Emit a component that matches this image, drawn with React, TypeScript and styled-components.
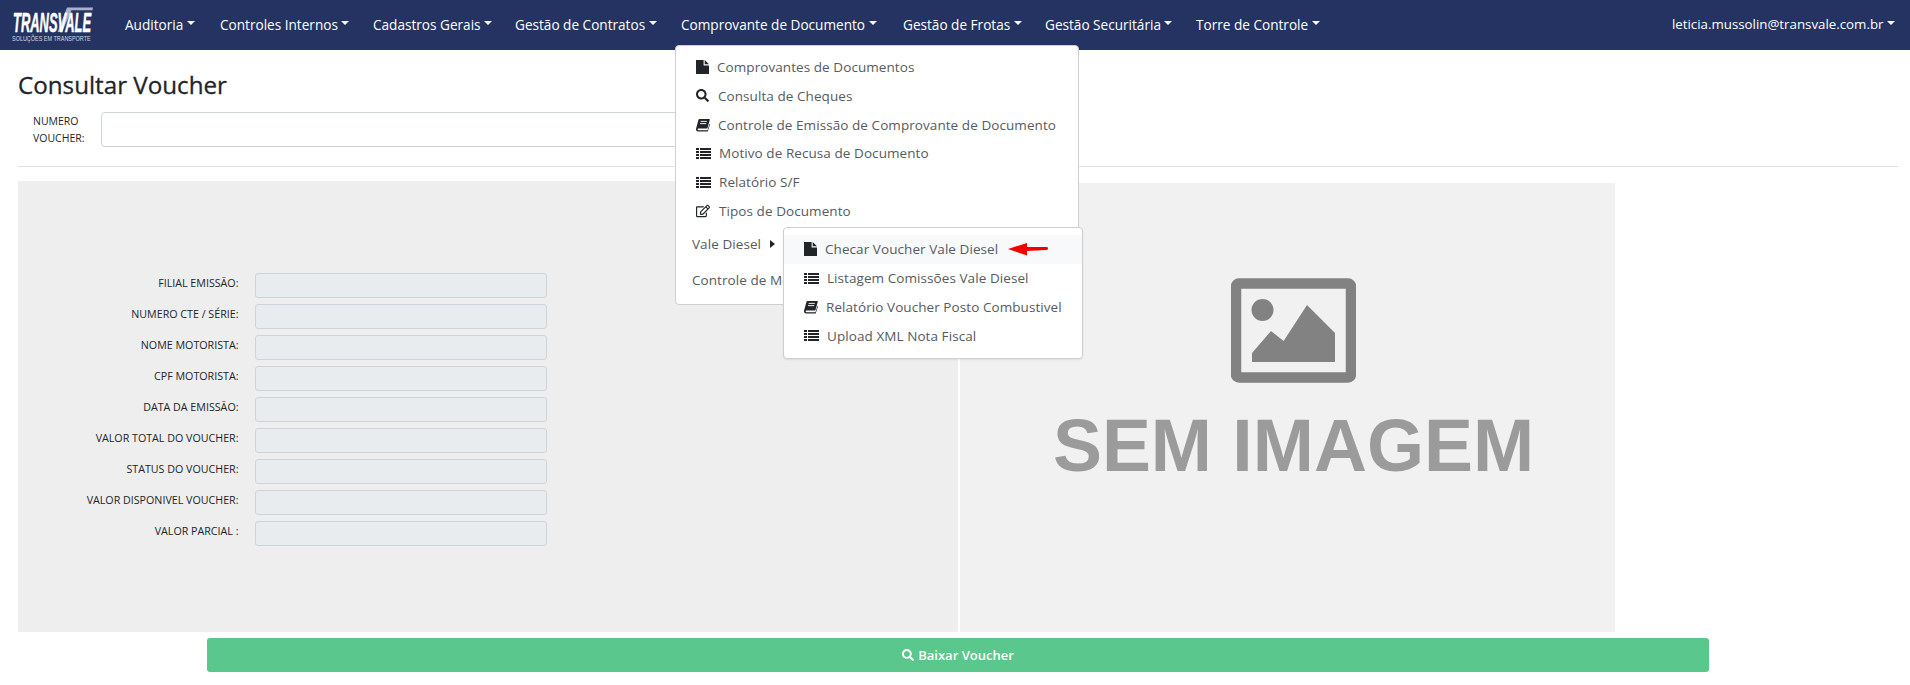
import React from 'react';
import styled, { createGlobalStyle } from 'styled-components';
import { FaRegEdit, FaSearch } from 'react-icons/fa';

const GlobalStyle = createGlobalStyle`
  html, body {
    margin: 0;
    padding: 0;
    background: #fff;
    font-family: "Open Sans", "Noto Sans", sans-serif;
    color: #212529;
  }
  * { box-sizing: border-box; }
`;

const Page = styled.div`
  position: relative;
  width: 1910px;
  height: 685px;
  overflow: hidden;
`;

const NavBar = styled.nav`
  display: flex;
  align-items: center;
  height: 50px;
  background: #253362;
  padding: 0 15px 0 12px;
`;

const LogoSlot = styled.div`
  display: flex;
  width: 113px;
  height: 50px;
  flex: none;
`;

const NavList = styled.div`
  display: flex;
  flex: 1;
  align-items: center;
  height: 100%;
`;

const NavItem = styled.div<{ $w: number }>`
  display: flex;
  align-items: center;
  width: ${(p) => p.$w}px;
  flex: none;
  font-size: 13.6px;
  color: #fff;
  white-space: nowrap;
  position: relative;
  top: -1px;
`;

const Caret = styled.span`
  display: inline-block;
  margin-left: 3.5px;
  margin-top: -2px;
  border-top: 4.5px solid #fff;
  border-left: 4.5px solid transparent;
  border-right: 4.5px solid transparent;
`;

const UserItem = styled(NavItem)`
  margin-left: auto;
  justify-content: flex-end;
  font-size: 13.3px;
`;

const Main = styled.main`
  padding: 0 12px 0 18px;
`;

const Title = styled.h1`
  margin: 0;
  padding-top: 20px;
  height: 62px;
  font-size: 24.2px;
  line-height: 30px;
  font-weight: 400;
  -webkit-text-stroke: 0.3px #212529;
  color: #212529;
`;

const SearchRow = styled.div`
  display: flex;
  height: 35px;
  align-items: center;
`;

const SearchLabel = styled.label`
  width: 83px;
  padding-left: 15px;
  font-size: 10.5px;
  line-height: 17px;
  color: #212529;
  flex: none;
`;

const SearchInput = styled.input`
  width: 600px;
  height: 35px;
  border: 1px solid #ced4da;
  border-radius: 4px;
  background: #fff;
`;

const Divider = styled.hr`
  margin: 19px 0 14px;
  border: 0;
  border-top: 1px solid #e3e3e3;
`;

const Panels = styled.section`
  display: flex;
  gap: 2px;
  height: 451px;
`;

const FormPanel = styled.div`
  display: flex;
  flex-direction: column;
  gap: 6px;
  width: 940px;
  flex: none;
  padding-top: 92px;
  background: #eeeeee;
`;

const FieldRow = styled.div`
  display: flex;
  height: 25px;
  gap: 16.5px;
`;

const FieldLabel = styled.label`
  width: 220.5px;
  text-align: right;
  font-size: 10.7px;
  line-height: 20px;
  color: #212529;
`;

const FieldInput = styled.input`
  width: 292px;
  height: 25px;
  border: 1px solid #ced4da;
  border-radius: 3px;
  background: #e9ecef;
`;

const ImagePanel = styled.div`
  display: flex;
  flex-direction: column;
  align-items: center;
  width: 655px;
  margin-top: 2px;
  padding: 95px 0 0 12px;
  background: #f1f1f1;
`;

const NoImageText = styled.div`
  margin-top: 27px;
  font-family: "Liberation Sans", Arial, sans-serif;
  font-weight: 700;
  font-size: 73.4px;
  line-height: 72px;
  color: #9b9b9b;
  white-space: nowrap;
`;

const DownloadButton = styled.button`
  display: flex;
  align-items: center;
  justify-content: center;
  gap: 4px;
  width: 1502px;
  height: 34px;
  margin: 6px 0 0 189px;
  border: 0;
  border-radius: 3px;
  background: #5ac78c;
  color: #fff;
  font-family: inherit;
  font-size: 13px;
  font-weight: 600;
`;

const Menu = styled.div`
  position: absolute;
  left: 675px;
  top: 45px;
  width: 404px;
  height: 260px;
  padding-top: 6.6px;
  background: #fff;
  border: 1px solid #cfcfcf;
  border-radius: 4px;
`;

const SubMenu = styled.div`
  position: absolute;
  left: 783px;
  top: 227px;
  width: 300px;
  height: 132px;
  padding-top: 7px;
  background: #fff;
  border: 1px solid #cfcfcf;
  border-radius: 4px;
  box-shadow: 0 1px 2px rgba(0, 0, 0, 0.08);
`;

const MenuItem = styled.div<{ $active?: boolean; $gap: number }>`
  display: flex;
  align-items: center;
  gap: ${(p) => p.$gap}px;
  height: 28.8px;
  padding-left: 20px;
  font-size: 13.5px;
  letter-spacing: 0.07px;
  color: #555b61;
  background: ${(p) => (p.$active ? '#f8f9fa' : 'transparent')};
  white-space: nowrap;
  svg { flex: none; color: #212529; }
`;

const PlainMenuItem = styled.div<{ $h: number }>`
  display: flex;
  align-items: center;
  gap: 9px;
  height: ${(p) => p.$h}px;
  padding-left: 16px;
  font-size: 13.5px;
  letter-spacing: 0.07px;
  color: #555b61;
  white-space: nowrap;
`;

const SideCaret = styled.span`
  border-left: 5px solid #212529;
  border-top: 4.5px solid transparent;
  border-bottom: 4.5px solid transparent;
`;

const RedArrow = styled.svg`
  margin-left: 2px;
  flex: none;
`;

const Logo = () => (
  <svg width="100" height="50" viewBox="0 0 100 50">
    <path d="M55 7.5h26l-.6 2.8H59.5L50 32h-4.5z" fill="#aab2c9" />
    <text
      transform="translate(1 32) scale(0.462 1)"
      fontFamily="Liberation Sans, sans-serif"
      fontWeight="700"
      fontStyle="italic"
      fontSize="28"
      fill="#fff"
      stroke="#fff"
      strokeWidth="0.6"
    >
      TRANSVALE
    </text>
    <text
      transform="translate(0 40.5) scale(0.73 1)"
      fontFamily="Liberation Sans, sans-serif"
      fontSize="7.5"
      fill="#d5d9e6"
    >
      SOLUÇÕES EM TRANSPORTE
    </text>
  </svg>
);

const FileIcon = () => (
  <svg width="13" height="14" viewBox="0 0 13 14">
    <path d="M0 0h7.6v5.4H13V14H0z M8.7 0 13 4.3H8.7z" fill="currentColor" />
  </svg>
);

const ListIcon = () => (
  <svg width="15" height="11" viewBox="0 0 15 11">
    <path
      d="M0 0h3v2H0zM4 0h11v2H4zM0 3h3v2H0zM4 3h11v2H4zM0 6h3v2H0zM4 6h11v2H4zM0 9h3v2H0zM4 9h11v2H4z"
      fill="currentColor"
    />
  </svg>
);

const BookIcon = () => (
  <svg width="14" height="14" viewBox="0 0 14 14">
    <path
      d="M3.6 1h9.6c.5 0 .7.4.6.8l-2.3 8.2c-.1.4-.4.6-.8.6H2.6c-.7 0-.9.4-.9.8 0 .5.3.8.9.8h8.9l2-6.5.3.3c.2.2.2.5.1.8L11.9 13c-.1.4-.4.6-.8.6H2.4C1 13.6 0 12.6 0 11.3c0-.3 0-.6.1-.9L2.4 2C2.6 1.4 3 1 3.6 1z"
      fill="currentColor"
    />
    <path d="M4.6 3.4h6.2M4 5.6h6.2" stroke="#fff" strokeWidth="0.9" />
  </svg>
);

const PictureIcon = () => (
  <svg width="125" height="105" viewBox="0 0 125 105">
    <rect x="5" y="5.5" width="115" height="94" rx="3" fill="none" stroke="#828282" strokeWidth="10.5" />
    <ellipse cx="31.5" cy="32" rx="11" ry="11" fill="#828282" />
    <path d="M21 84V75L40 53 52.6 63 76 27 104 55V84z" fill="#828282" />
  </svg>
);

const navItems: [string, number][] = [
  ['Auditoria', 95],
  ['Controles Internos', 153],
  ['Cadastros Gerais', 142],
  ['Gestão de Contratos', 166],
  ['Comprovante de Documento', 222],
  ['Gestão de Frotas', 142],
  ['Gestão Securitária', 151],
  ['Torre de Controle', 140],
];

const fields = [
  'FILIAL EMISSÃO:',
  'NUMERO CTE / SÉRIE:',
  'NOME MOTORISTA:',
  'CPF MOTORISTA:',
  'DATA DA EMISSÃO:',
  'VALOR TOTAL DO VOUCHER:',
  'STATUS DO VOUCHER:',
  'VALOR DISPONIVEL VOUCHER:',
  'VALOR PARCIAL :',
];

export default function App(): React.ReactElement {
  return (
    <Page>
      <GlobalStyle />
      <NavBar>
        <LogoSlot>
          <Logo />
        </LogoSlot>
        <NavList>
          {navItems.map(([label, width]) => (
            <NavItem key={label} $w={width}>
              {label}
              <Caret />
            </NavItem>
          ))}
          <UserItem $w={240}>
            leticia.mussolin@transvale.com.br
            <Caret />
          </UserItem>
        </NavList>
      </NavBar>

      <Main>
        <Title>Consultar Voucher</Title>
        <SearchRow>
          <SearchLabel>
            NUMERO
            <br />
            VOUCHER:
          </SearchLabel>
          <SearchInput />
        </SearchRow>
        <Divider />
        <Panels>
          <FormPanel>
            {fields.map((field) => (
              <FieldRow key={field}>
                <FieldLabel>{field}</FieldLabel>
                <FieldInput disabled />
              </FieldRow>
            ))}
          </FormPanel>
          <ImagePanel>
            <PictureIcon />
            <NoImageText>SEM IMAGEM</NoImageText>
          </ImagePanel>
        </Panels>
        <DownloadButton>
          <FaSearch size={12} />
          Baixar Voucher
        </DownloadButton>
      </Main>

      <Menu>
        <MenuItem $gap={8}>
          <FileIcon />
          Comprovantes de Documentos
        </MenuItem>
        <MenuItem $gap={9}>
          <FaSearch size={13} />
          Consulta de Cheques
        </MenuItem>
        <MenuItem $gap={8}>
          <BookIcon />
          Controle de Emissão de Comprovante de Documento
        </MenuItem>
        <MenuItem $gap={8}>
          <ListIcon />
          Motivo de Recusa de Documento
        </MenuItem>
        <MenuItem $gap={8}>
          <ListIcon />
          Relatório S/F
        </MenuItem>
        <MenuItem $gap={9}>
          <FaRegEdit size={14} />
          Tipos de Documento
        </MenuItem>
        <PlainMenuItem $h={37}>
          Vale Diesel
          <SideCaret />
        </PlainMenuItem>
        <PlainMenuItem $h={35}>Controle de Motoristas</PlainMenuItem>
      </Menu>

      <SubMenu>
        <MenuItem $active $gap={8}>
          <FileIcon />
          Checar Voucher Vale Diesel
          <RedArrow width="40" height="13" viewBox="0 0 40 13">
            <path d="M0 6 19 0v4h19.5c1 0 1.5.7 1.5 1.6S39.5 7 38.5 7L19 8v4.5z" fill="#f40000" />
          </RedArrow>
        </MenuItem>
        <MenuItem $gap={8}>
          <ListIcon />
          Listagem Comissões Vale Diesel
        </MenuItem>
        <MenuItem $gap={8}>
          <BookIcon />
          Relatório Voucher Posto Combustivel
        </MenuItem>
        <MenuItem $gap={8}>
          <ListIcon />
          Upload XML Nota Fiscal
        </MenuItem>
      </SubMenu>
    </Page>
  );
}
